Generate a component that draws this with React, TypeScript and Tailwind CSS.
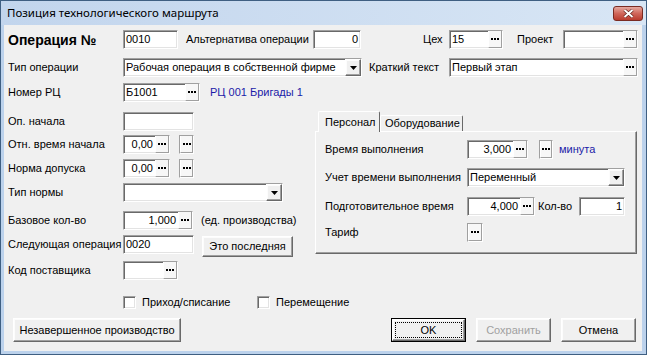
import React from "react";

const sunken =
  "bg-white border border-t-[#a0a0a0] border-l-[#a0a0a0] border-r-white border-b-white shadow-[inset_1px_1px_0_#696969,inset_-1px_-1px_0_#e3e3e3]";
const raised =
  "bg-[#f0f0f0] border border-t-white border-l-white border-r-[#696969] border-b-[#696969] shadow-[inset_-1px_-1px_0_#a0a0a0,inset_1px_1px_0_#fcfcfc]";

const Dots = () => (
  <svg width="8" height="2" viewBox="0 0 8 2">
    <rect x="0" y="0" width="2" height="2" fill="#000" />
    <rect x="3" y="0" width="2" height="2" fill="#000" />
    <rect x="6" y="0" width="2" height="2" fill="#000" />
  </svg>
);

const Arrow = () => (
  <svg width="7" height="4" viewBox="0 0 7 4">
    <polygon points="0,0 7,0 3.5,4" fill="#000" />
  </svg>
);

const DotBtn = () => (
  <div className="w-[14px] h-full flex items-center justify-center bg-[#f7f7f7] border-l border-l-white border-r border-r-[#a0a0a0] border-b border-b-[#a0a0a0]">
    <Dots />
  </div>
);

const Field = ({
  w,
  text = "",
  right = false,
  dots = false,
}: {
  w: string;
  text?: string;
  right?: boolean;
  dots?: boolean;
}) => (
  <div className={`${w} h-[19px] ${sunken} flex items-stretch shrink-0`}>
    <div
      className={`flex-1 flex items-center px-[2px] overflow-hidden whitespace-nowrap ${
        right ? "justify-end" : "justify-start"
      }`}
    >
      {text}
    </div>
    {dots && <DotBtn />}
  </div>
);

const SmallBtn = ({ w = "w-[15px]" }: { w?: string }) => (
  <div className={`${w} h-[19px] ${sunken} flex items-stretch shrink-0`}>
    <DotBtn />
  </div>
);

const Select = ({ w, text = "" }: { w: string; text?: string }) => (
  <div className={`${w} h-[19px] ${sunken} flex items-stretch shrink-0`}>
    <div className="flex-1 flex items-center px-[2px] whitespace-nowrap overflow-hidden">{text}</div>
    <div className={`w-[16px] ${raised} flex items-center justify-center`}>
      <Arrow />
    </div>
  </div>
);

const Button = ({
  w,
  h = "h-[24px]",
  text,
  disabled = false,
  def = false,
}: {
  w: string;
  h?: string;
  text: string;
  disabled?: boolean;
  def?: boolean;
}) =>
  def ? (
    <div className={`${w} ${h} border border-black shrink-0`}>
      <div className={`w-full h-full ${raised} flex items-center justify-center p-[2px]`}>
        <div className="w-full h-full border border-dotted border-black flex items-center justify-center">
          {text}
        </div>
      </div>
    </div>
  ) : (
    <div
      className={`${w} ${h} ${raised} flex items-center justify-center shrink-0 ${
        disabled ? "text-[#a0a0a0]" : ""
      }`}
    >
      {text}
    </div>
  );

const Check = () => <div className={`w-[13px] h-[13px] ${sunken} shrink-0`} />;

export default function App() {
  return (
    <div className="w-[647px] h-[355px] border border-[#3f5f82] bg-[#bcd2ec] flex flex-col font-['Liberation_Sans',Arial,sans-serif] text-[11px] text-black leading-none overflow-hidden">
      {/* title bar */}
      <div className="h-[24px] shrink-0 flex items-center justify-between bg-gradient-to-r from-[#c2d5ed] to-[#d8e6f5]">
        <div className="pl-[6px] text-[11.5px] font-['Noto_Sans',sans-serif] text-black">
          Позиция технологического маршрута
        </div>
        <div className="mr-[3px] mt-[1px] w-[30px] h-[15px] rounded-[3px] border border-[#7a2b22] bg-gradient-to-b from-[#e4a89f] via-[#d0665a] to-[#b93b2e] flex items-center justify-center">
          <svg width="11" height="9" viewBox="0 0 11 9">
            <path d="M1.5 1 L9.5 8 M9.5 1 L1.5 8" stroke="#5a1d16" strokeWidth="3.2" />
            <path d="M1.5 1 L9.5 8 M9.5 1 L1.5 8" stroke="#fff" strokeWidth="2" />
          </svg>
        </div>
      </div>

      {/* content */}
      <div className="flex-1 ml-[3px] mr-[4px] mb-[3px] bg-[#f0f0f0] flex flex-col pl-[4px]">
        {/* row 1 */}
        <div className="mt-[5px] h-[19px] flex items-center">
          <div className="w-[115px] text-[14px] font-bold">Операция №</div>
          <Field w="w-[55px]" text="0010" />
          <div className="w-[8px]" />
          <div className="w-[127px] whitespace-nowrap">Альтернатива операции</div>
          <Field w="w-[48px]" text="0" right />
          <div className="w-[62px]" />
          <div className="w-[26px]">Цех</div>
          <Field w="w-[54px]" text="15" dots />
          <div className="w-[14px]" />
          <div className="w-[46px]">Проект</div>
          <Field w="w-[75px]" dots />
        </div>

        {/* row 2 */}
        <div className="mt-[9px] h-[19px] flex items-center">
          <div className="w-[115px]">Тип операции</div>
          <Select w="w-[239px]" text="Рабочая операция в собственной фирме" />
          <div className="w-[7px]" />
          <div className="w-[80px] whitespace-nowrap">Краткий текст</div>
          <Field w="w-[189px]" text="Первый этап" dots />
        </div>

        {/* row 3 */}
        <div className="mt-[6px] h-[19px] flex items-center">
          <div className="w-[115px]">Номер РЦ</div>
          <Field w="w-[77px]" text="Б1001" dots />
          <div className="ml-[10px] text-[#1b1ba8]">РЦ 001 Бригады 1</div>
        </div>

        {/* middle section */}
        <div className="mt-[10px] flex items-start">
          {/* left column */}
          <div className="w-[307px] flex flex-col">
            <div className="h-[19px] flex items-center">
              <div className="w-[115px]">Оп. начала</div>
              <Field w="w-[71px]" />
            </div>
            <div className="mt-[4px] h-[19px] flex items-center">
              <div className="w-[115px]">Отн. время начала</div>
              <Field w="w-[47px]" text="0,00" right dots />
              <div className="w-[9px]" />
              <SmallBtn />
            </div>
            <div className="mt-[5px] h-[19px] flex items-center">
              <div className="w-[115px]">Норма допуска</div>
              <Field w="w-[47px]" text="0,00" right dots />
              <div className="w-[9px]" />
              <SmallBtn />
            </div>
            <div className="mt-[5px] h-[19px] flex items-center">
              <div className="w-[115px]">Тип нормы</div>
              <Select w="w-[160px]" />
            </div>
            <div className="mt-[9px] h-[19px] flex items-center">
              <div className="w-[115px]">Базовое кол-во</div>
              <Field w="w-[70px]" text="1,000" right dots />
              <div className="ml-[8px] whitespace-nowrap">(ед. производства)</div>
            </div>
            <div className="mt-[5px] h-[19px] flex items-center">
              <div className="w-[115px] whitespace-nowrap">Следующая операция</div>
              <Field w="w-[71px]" text="0020" />
              <div className="w-[8px]" />
              <div className="mt-[3px]">
                <Button w="w-[91px]" h="h-[21px]" text="Это последняя" />
              </div>
            </div>
            <div className="mt-[7px] h-[19px] flex items-center">
              <div className="w-[115px]">Код поставщика</div>
              <Field w="w-[55px]" dots />
            </div>
          </div>

          {/* right tab panel */}
          <div className="w-[322px] flex flex-col">
            <div className="h-[19px] flex items-end pl-[3px] relative z-10">
              <div className="w-[62px] h-[21px] -mb-[1px] bg-[#f0f0f0] border-t border-l border-t-white border-l-white border-r border-r-[#696969] rounded-t-[2px] flex items-start pt-[5px] pl-[6px]">
                Персонал
              </div>
              <div className="w-[83px] h-[16px] bg-[#f0f0f0] border-t border-l border-t-white border-l-white border-r border-r-[#696969] rounded-t-[2px] flex items-center pl-[4px] whitespace-nowrap">
                Оборудование
              </div>
            </div>
            <div className="h-[123px] border border-t-white border-l-white border-r-[#696969] border-b-[#696969] shadow-[inset_-1px_-1px_0_#a0a0a0] flex flex-col pl-[9px]">
              <div className="mt-[8px] h-[19px] flex items-center">
                <div className="w-[142px]">Время выполнения</div>
                <Field w="w-[61px]" text="3,000" right dots />
                <div className="w-[11px]" />
                <SmallBtn w="w-[14px]" />
                <div className="ml-[6px] text-[#1b1ba8]">минута</div>
              </div>
              <div className="mt-[9px] h-[19px] flex items-center">
                <div className="w-[142px] whitespace-nowrap">Учет времени выполнения</div>
                <Select w="w-[158px]" text="Переменный" />
              </div>
              <div className="mt-[10px] h-[19px] flex items-center">
                <div className="w-[142px] whitespace-nowrap">Подготовительное время</div>
                <Field w="w-[68px]" text="4,000" right dots />
                <div className="ml-[3px] w-[41px]">Кол-во</div>
                <Field w="w-[46px]" text="1" right />
              </div>
              <div className="mt-[7px] h-[19px] flex items-center">
                <div className="w-[142px]">Тариф</div>
                <SmallBtn w="w-[16px]" />
              </div>
            </div>
          </div>
        </div>

        {/* checkboxes */}
        <div className="mt-[16px] h-[13px] flex items-center">
          <div className="w-[115px]" />
          <Check />
          <div className="ml-[6px] w-[115px]">Приход/списание</div>
          <Check />
          <div className="ml-[6px]">Перемещение</div>
        </div>

        {/* bottom buttons */}
        <div className="mt-[9px] flex items-center">
          <div className="w-[5px]" />
          <Button w="w-[168px]" text="Незавершенное производство" />
          <div className="w-[210px]" />
          <Button w="w-[75px]" text="OK" def />
          <div className="w-[10px]" />
          <Button w="w-[75px]" text="Сохранить" disabled />
          <div className="w-[10px]" />
          <Button w="w-[75px]" text="Отмена" />
        </div>
      </div>
    </div>
  );
}
